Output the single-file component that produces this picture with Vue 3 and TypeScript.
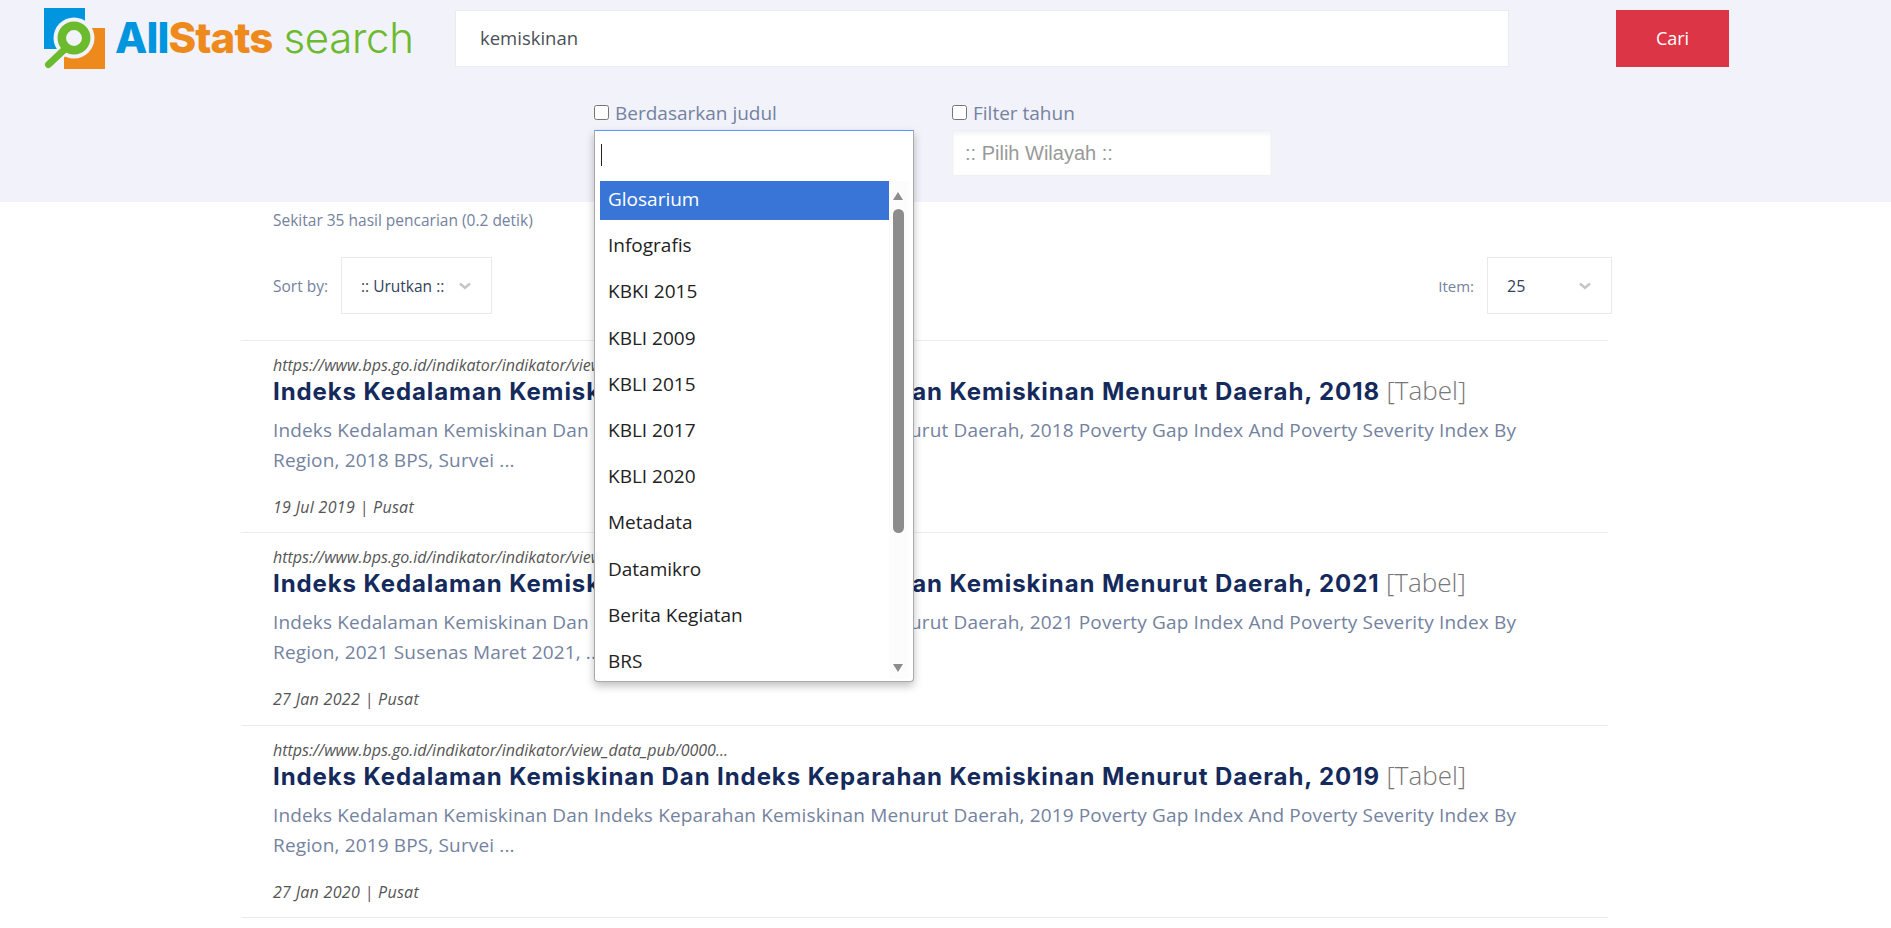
<script setup lang="ts">
const options = [
  "Glosarium",
  "Infografis",
  "KBKI 2015",
  "KBLI 2009",
  "KBLI 2015",
  "KBLI 2017",
  "KBLI 2020",
  "Metadata",
  "Datamikro",
  "Berita Kegiatan",
  "BRS",
];

const results = [
  {
    year: "2018",
    tail: "2018 BPS, Survei ...",
    date: "19 Jul 2019",
  },
  {
    year: "2021",
    tail: "2021 Susenas Maret 2021, ...",
    date: "27 Jan 2022",
  },
  {
    year: "2019",
    tail: "2019 BPS, Survei ...",
    date: "27 Jan 2020",
  },
];
</script>

<template>
  <header class="top">
    <div class="search-row">
      <a class="logo">
        <svg class="logo-icon" viewBox="0 0 62 62" width="62" height="62">
          <rect x="0" y="0" width="41" height="41" fill="#0096df" />
          <rect x="20" y="20" width="41" height="41" fill="#ee8a1c" />
          <circle cx="30" cy="30" r="20.5" fill="#f1f2fa" />
          <path d="M20 42 L5 56" stroke="#f1f2fa" stroke-width="11" />
          <path d="M21 41 L4.5 56.5" stroke="#6cbb2f" stroke-width="7" stroke-linecap="round" />
          <circle cx="30" cy="30" r="12.2" fill="#f1f2fa" stroke="#6cbb2f" stroke-width="8.5" />
        </svg>
        <span class="logo-text"><b class="all">All</b><b class="stats">Stats</b> <span class="word">search</span></span>
      </a>
      <input class="search-input" type="text" value="kemiskinan" />
      <button class="search-btn" type="button">Cari</button>
    </div>
    <div class="filters">
      <div class="filter">
        <label class="check"><input type="checkbox" /> Berdasarkan judul</label>
        <div class="select-open">
          <div class="select-search"><span class="caret"></span></div>
          <div class="select-list">
            <ul class="options">
              <li v-for="(o, i) in options" :key="o" :class="{ active: i === 0 }">{{ o }}</li>
            </ul>
            <div class="scrollbar">
              <span class="arrow up"></span>
              <span class="thumb"></span>
              <span class="arrow down"></span>
            </div>
          </div>
        </div>
      </div>
      <div class="filter">
        <label class="check"><input type="checkbox" /> Filter tahun</label>
        <div class="wilayah">:: Pilih Wilayah ::</div>
      </div>
    </div>
  </header>

  <main class="content">
    <p class="stats-line">Sekitar 35 hasil pencarian (0.2 detik)</p>
    <div class="toolbar">
      <div class="tool">
        <span class="tool-label">Sort by:</span>
        <div class="pick pick-sort">
          <span>:: Urutkan ::</span>
          <svg class="chev" viewBox="0 0 12 8" width="12" height="8"><path d="M1 1.5 L6 6 L11 1.5" fill="none" stroke="#c4c4c4" stroke-width="2.4" /></svg>
        </div>
      </div>
      <div class="tool">
        <span class="tool-label item-label">Item:</span>
        <div class="pick pick-item">
          <span>25</span>
          <svg class="chev" viewBox="0 0 12 8" width="12" height="8"><path d="M1 1.5 L6 6 L11 1.5" fill="none" stroke="#c4c4c4" stroke-width="2.4" /></svg>
        </div>
      </div>
    </div>

    <article v-for="r in results" :key="r.year" class="result">
      <div class="url">https://www.bps.go.id/indikator/indikator/view_data_pub/0000...</div>
      <h3 class="title">Indeks Kedalaman Kemiskinan Dan Indeks Keparahan Kemiskinan Menurut Daerah, {{ r.year }} <span class="kind">[Tabel]</span></h3>
      <p class="desc">Indeks Kedalaman Kemiskinan Dan Indeks Keparahan Kemiskinan Menurut Daerah, {{ r.year }} Poverty Gap Index And Poverty Severity Index By</p>
      <p class="desc">Region, {{ r.tail }}</p>
      <div class="meta">{{ r.date }} | Pusat</div>
    </article>
  </main>
</template>

<style scoped>
.top {
  height: 202px;
  background: #f1f2fa;
  font-family: "Open Sans", sans-serif;
}

.search-row {
  display: flex;
  align-items: flex-start;
  padding: 10px 0 0 44px;
  height: 57px;
}

.logo {
  display: flex;
  width: 411px;
  margin-top: -2px;
}

.logo-icon {
  flex: none;
}

.logo-text {
  margin: 6px 0 0 9px;
  font-family: Inter, sans-serif;
  font-size: 42px;
  line-height: 48px;
  letter-spacing: -0.9px;
  white-space: nowrap;
}

.all {
  color: #0096df;
  font-weight: 800;
}

.stats {
  color: #ee8a1c;
  font-weight: 800;
}

.word {
  color: #6cbb2f;
  font-weight: 300;
  letter-spacing: -0.3px;
}

.search-input {
  width: 1054px;
  height: 57px;
  box-sizing: border-box;
  border: 1px solid #e9ecef;
  background: #fff;
  padding: 0 24px 2px;
  font: 18.5px "Open Sans", sans-serif;
  color: #495057;
  outline: none;
}

.search-btn {
  width: 113px;
  height: 57px;
  margin-left: 107px;
  padding: 0 0 2px;
  border: none;
  background: #dc3545;
  color: #fff;
  font: 18px "Open Sans", sans-serif;
}

.filters {
  display: flex;
  gap: 39px;
  padding: 31px 0 0 594px;
}

.filter {
  position: relative;
  width: 319px;
}

.check {
  display: flex;
  align-items: center;
  gap: 6px;
  height: 28px;
  margin-top: 1px;
  margin-bottom: -1px;
  font-size: 19px;
  color: #74829f;
}

.check input {
  width: 15px;
  height: 15px;
  margin: -1px 0 0 0;
}

.wilayah {
  width: 320px;
  height: 46px;
  margin-top: 4px;
  box-sizing: border-box;
  background: #fff;
  border: 1px solid #eef0f4;
  box-shadow: inset 0 3px 4px rgba(0, 0, 0, 0.05);
  padding: 0 12px;
  font: 20px/44px "Liberation Sans", sans-serif;
  color: #999;
}

.select-open {
  position: absolute;
  top: 32px;
  left: 0;
  z-index: 5;
  width: 320px;
  box-sizing: border-box;
  background: #fff;
  border: 1px solid #aaa;
  border-top-color: #5897fb;
  border-radius: 0 0 4px 4px;
  box-shadow: 0 4px 8px rgba(0, 0, 0, 0.25);
  height: 552px;
}

.select-search {
  height: 45px;
  padding: 13px 0 0 6px;
  box-sizing: border-box;
}

.caret {
  display: block;
  width: 1px;
  height: 22px;
  background: #222;
}

.select-list {
  display: flex;
  padding-left: 5px;
}

.options {
  list-style: none;
  margin: 0;
  padding: 5px 0 0 0;
  width: 289px;
  font-size: 19px;
  color: #222;
}

.options li {
  height: 39px;
  line-height: 37px;
  padding: 0 8px;
  margin-bottom: 7.2px;
  white-space: nowrap;
}

.options li.active {
  background: #3875d7;
  color: #fff;
}

.scrollbar {
  position: relative;
  width: 20px;
  margin-top: 5px;
  height: 498px;
  background: #fcfcfc;
}

.thumb {
  position: absolute;
  left: 4px;
  top: 28px;
  width: 11px;
  height: 324px;
  background: #8c8c8c;
  border-radius: 6px;
}

.arrow {
  position: absolute;
  left: 4px;
  width: 0;
  height: 0;
  border-left: 5.5px solid transparent;
  border-right: 5.5px solid transparent;
}

.arrow.up {
  top: 11px;
  border-bottom: 8px solid #8c8c8c;
}

.arrow.down {
  bottom: 7px;
  border-top: 8px solid #8c8c8c;
}

.content {
  width: 1367px;
  margin-left: 241px;
  font-family: "Open Sans", sans-serif;
}

.stats-line {
  margin: 0;
  padding: 8px 0 0 32px;
  font-size: 15.5px;
  line-height: 20px;
  color: #74829f;
}

.toolbar {
  display: flex;
  justify-content: space-between;
  width: 1371px;
  padding: 27px 0 26px 32px;
  box-sizing: border-box;
}

.tool {
  display: flex;
  align-items: center;
  gap: 13px;
  font-size: 15.5px;
}

.tool-label {
  color: #74829f;
}

.item-label {
  font-size: 15px;
}

.pick {
  display: flex;
  align-items: center;
  justify-content: space-between;
  height: 57px;
  box-sizing: border-box;
  border: 1px solid #e9e9e9;
  padding: 0 20px 0 19px;
  color: #33415c;
  font-size: 15.5px;
}

.pick-sort {
  width: 151px;
}

.pick-item {
  width: 125px;
  font-size: 16px;
}

.result {
  height: 192.3px;
  box-sizing: border-box;
  border-top: 1px solid #e9ebee;
  padding: 14px 0 0 32px;
}

.result:last-child {
  height: 193px;
  border-bottom: 1px solid #e9ebee;
}

.url {
  font-size: 16px;
  font-style: italic;
  line-height: 20px;
  color: #555;
  white-space: nowrap;
}

.title {
  margin: 0;
  font-family: Inter, sans-serif;
  font-size: 24px;
  line-height: 30px;
  font-weight: 700;
  letter-spacing: 0.91px;
  color: #152a5c;
  white-space: nowrap;
}

.kind {
  font-family: "Open Sans", sans-serif;
  font-weight: 300;
  letter-spacing: 0;
  color: #777;
  font-size: 26px;
}

.desc {
  margin: 0;
  font-size: 19px;
  line-height: 30px;
  letter-spacing: 0.15px;
  color: #74829f;
  white-space: nowrap;
}

.title + .desc {
  margin-top: 8px;
}

.meta {
  margin-top: 22px;
  font-size: 16px;
  font-style: italic;
  line-height: 20px;
  letter-spacing: 0.3px;
  color: #555;
}
</style>

<style>
body {
  background: #fff;
  overflow: hidden;
}
</style>
